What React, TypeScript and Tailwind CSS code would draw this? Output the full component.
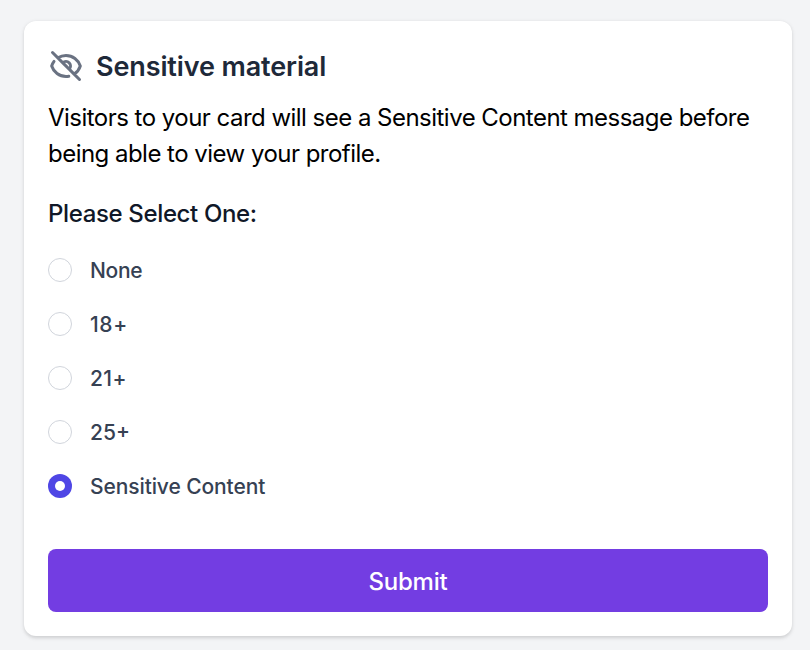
import React from 'react';

const options = [
  { label: 'None', tracking: 'tracking-[-0.3px]' },
  { label: '18+', tracking: 'tracking-[0.6px]' },
  { label: '21+', tracking: 'tracking-[0.4px]' },
  { label: '25+', tracking: 'tracking-[0px]' },
  { label: 'Sensitive Content', tracking: 'tracking-[-0.1px]' },
];

function Radio({ checked }: { checked: boolean }) {
  return checked ? (
    <span className="flex size-6 items-center justify-center rounded-full bg-[#4f46e5]">
      <span className="size-[10px] rounded-full bg-white" />
    </span>
  ) : (
    <span className="size-6 rounded-full border border-gray-300 bg-white" />
  );
}

export default function App() {
  return (
    <div className="h-[650px] w-[810px] bg-gray-100 pt-[21px] pl-6 font-['Inter',sans-serif]">
      <main className="h-[615px] w-[768px] rounded-xl bg-white px-6 pt-[27px] shadow-[0_1.5px_4.5px_rgba(0,0,0,0.1),0_1.5px_3px_rgba(0,0,0,0.06)]">
        <h1 className="flex h-9 items-center text-[27px] font-semibold tracking-[-0.12px] text-gray-800">
          <svg className="mr-3 size-9 text-gray-500" viewBox="0 0 24 24" fill="none" stroke="currentColor" strokeWidth="2" strokeLinecap="round" strokeLinejoin="round">
            <path d="M13.875 18.825A10.05 10.05 0 0112 19c-4.478 0-8.268-2.943-9.543-7a9.97 9.97 0 011.563-3.029m5.858.908a3 3 0 114.243 4.243M9.878 9.878l4.242 4.242M9.88 9.88l-3.29-3.29m7.532 7.532l3.29 3.29M3 3l3.59 3.59m0 0A9.953 9.953 0 0112 5c4.478 0 8.268 2.943 9.543 7a10.025 10.025 0 01-4.132 5.411m0 0L21 21" />
          </svg>
          <span className="pt-0.5">Sensitive material</span>
        </h1>
        <p className="mt-4 text-2xl leading-9 tracking-[-0.525px] text-black">
          Visitors to your card will see a Sensitive Content message before<br />
          being able to view your profile.
        </p>
        <h2 className="mt-6 text-2xl leading-9 font-medium tracking-[-0.36px] text-gray-900">Please Select One:</h2>
        <div className="mt-[26px] flex flex-col gap-[30px]">
          {options.map(({ label, tracking }, i) => (
            <label key={label} className="flex h-6 items-center gap-[18px] text-[21px] font-medium text-gray-700">
              <Radio checked={i === 4} />
              <span className={`pt-0.5 ${tracking}`}>{label}</span>
            </label>
          ))}
        </div>
        <button className="mt-[51px] h-[63px] w-full rounded-lg bg-[#733de2] pt-0.5 text-2xl font-medium tracking-[-0.2px] text-white">Submit</button>
      </main>
    </div>
  );
}
